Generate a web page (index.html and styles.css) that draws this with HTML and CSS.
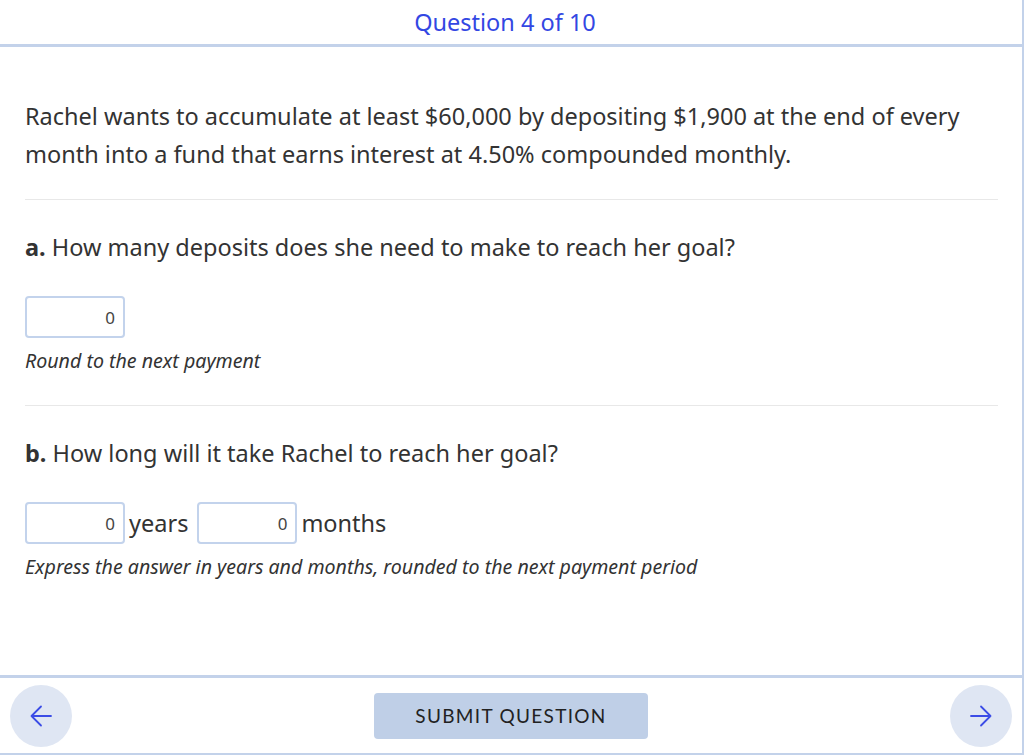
FILE: index.html
```html
<!DOCTYPE html>
<html>
<head>
<meta charset="utf-8">
<link rel="stylesheet" href="styles.css">
</head>
<body>
<div class="frame">
  <header class="top">Question 4 of 10</header>
  <main class="content">
    <p class="intro">Rachel wants to accumulate at least $60,000 by depositing $1,900 at the end of every month into a fund that earns interest at 4.50% compounded monthly.</p>
    <hr class="divider">
    <section class="part">
      <p class="q"><b>a.</b> How many deposits does she need to make to reach her goal?</p>
      <div class="answers"><span class="box">0</span></div>
      <p class="hint">Round to the next payment</p>
    </section>
    <hr class="divider">
    <section class="part">
      <p class="q"><b>b.</b> How long will it take Rachel to reach her goal?</p>
      <div class="answers"><span class="box">0</span><span class="unit">years</span><span class="box">0</span><span class="unit">months</span></div>
      <p class="hint">Express the answer in years and months, rounded to the next payment period</p>
    </section>
  </main>
  <footer class="bottom">
    <span class="nav"><svg width="24" height="24" viewBox="0 0 24 24"><path d="M22 12H2.5M12 2.5L2.5 12L12 21.5" fill="none" stroke="#3b4ce6" stroke-width="1.8" stroke-linecap="round" stroke-linejoin="round"/></svg></span>
    <button class="submit">SUBMIT QUESTION</button>
    <span class="nav"><svg width="24" height="24" viewBox="0 0 24 24"><path d="M2 12H21.5M12 2.5L21.5 12L12 21.5" fill="none" stroke="#3b4ce6" stroke-width="1.8" stroke-linecap="round" stroke-linejoin="round"/></svg></span>
  </footer>
</div>
</body>
</html>
```

FILE: styles.css
```css
html, body {
  margin: 0;
  padding: 0;
  background: #fff;
}
.frame {
  width: 1024px;
  height: 755px;
  box-sizing: border-box;
  border-right: 2px solid #c3d2ea;
  display: flex;
  flex-direction: column;
  font-family: "Noto Sans", "Open Sans", sans-serif;
  color: #333;
}
.top {
  height: 44px;
  border-bottom: 3px solid #c3d2ea;
  display: flex;
  align-items: center;
  justify-content: center;
  font-size: 23.5px;
  color: #3347e3;
  padding-right: 12px;
  flex-shrink: 0;
}
.content {
  flex: 1;
  padding: 50px 24px 0 25px;
}
.intro {
  margin: 0 0 26px 0;
  font-size: 23.5px;
  line-height: 38px;
}
.divider {
  border: 0;
  border-top: 1px solid #e8e8e8;
  margin: 0;
}
.part {
  padding: 31px 0 30px 0;
}
.q {
  margin: 0;
  font-size: 23.5px;
  line-height: 32px;
}
.q b { font-weight: 700; }
.answers {
  display: flex;
  align-items: center;
  gap: 4px;
  margin-top: 33px;
}
.box {
  width: 100px;
  height: 42px;
  box-sizing: border-box;
  border: 2px solid #c3d3ec;
  border-radius: 4px;
  display: flex;
  align-items: center;
  justify-content: flex-end;
  padding-right: 8px;
  font-size: 17px;
  color: #444;
}
.unit {
  font-size: 23.5px;
  margin-right: 5px;
}
.hint {
  margin: 9px 0 0 0;
  font-style: italic;
  font-size: 19.6px;
  line-height: 28px;
  color: #333;
}
.bottom {
  height: 80px;
  flex-shrink: 0;
  box-sizing: border-box;
  border-top: 3px solid #c3d2ea;
  border-bottom: 2px solid #c3d2ea;
  display: flex;
  align-items: center;
  justify-content: space-between;
  padding: 0 10px 0 10px;
}
.nav {
  width: 62px;
  height: 62px;
  border-radius: 50%;
  background: #dfe6f3;
  display: flex;
  align-items: center;
  justify-content: center;
}
.submit {
  width: 274px;
  height: 46px;
  border: 0;
  border-radius: 4px;
  background: #bfcfe7;
  font-family: Lato, "Open Sans", sans-serif;
  font-size: 19px;
  letter-spacing: 1.3px;
  color: #222;
  margin-left: 0;
}
```
